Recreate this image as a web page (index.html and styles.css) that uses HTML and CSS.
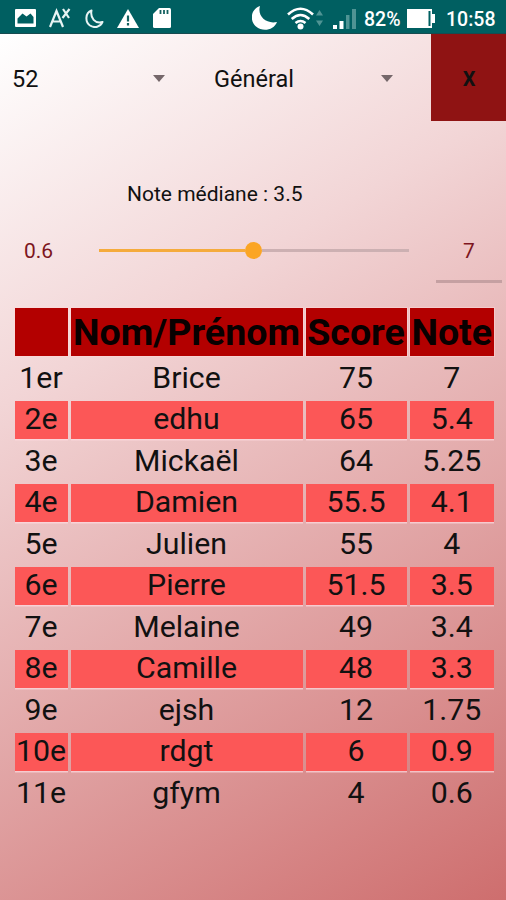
FILE: index.html
```
<!DOCTYPE html>
<html lang="fr">
<head>
    <meta charset="UTF-8">
    <meta name="viewport" content="width=device-width, initial-scale=1.0">
    <title>Notes</title>
    <link rel="stylesheet" href="styles.css">
</head>
<body>

<div class="status-bar">
    <div class="notifications">
        <svg width="21" height="18" viewBox="0 0 21 18"><path fill="#fff" fill-rule="evenodd" d="M1 0h19a1 1 0 0 1 1 1v16a1 1 0 0 1-1 1H1a1 1 0 0 1-1-1V1a1 1 0 0 1 1-1zM2.500 14.500h16V8l-3-3.500-4 3-4-3-5 5z"/></svg>
        <svg class="font-icon" width="22" height="20" viewBox="0 0 22 20"><path fill="none" stroke="#e8f4f4" stroke-width="2.2" d="M1 19L7.500 3L14 19M3.500 13.500h8M14 1l6 9M20.500 1l-7 9"/></svg>
        <svg class="moon-icon" width="19" height="19" viewBox="0 0 19 19"><path fill="none" stroke="#e8f4f4" stroke-width="2" stroke-linejoin="round" d="M6.500 1.500C0 4 0 13 5 16.500C9.500 19.500 15.500 18 17.500 13C10 15 5 9 6.500 1.500z"/></svg>
        <svg class="warning-icon" width="22" height="19" viewBox="0 0 22 19"><path fill="#fff" d="M11 0l11 19H0z"/><path stroke="#12605f" stroke-width="2.200" d="M11 6.500v6M11 14v2.400"/></svg>
        <svg class="card-icon" width="18" height="20" viewBox="0 0 18 20"><path fill="#fff" d="M6 0h10.500A1.500 1.500 0 0 1 18 1.500v17a1.500 1.500 0 0 1-1.500 1.500h-15A1.500 1.500 0 0 1 0 18.500V6z"/><path stroke="#12605f" stroke-width="1.800" d="M7.500 2v4M11 2v4M14.500 2v4"/></svg>
    </div>
    <div class="system">
        <svg width="25" height="24" viewBox="0 0 25 24"><path fill="#fff" d="M8 0C-1 3-3 14 4 20.500C11 26.500 22 24 25 16C14 18.500 5 10 8 0z"/></svg>
        <svg class="wifi-icon" width="27" height="23" viewBox="0 0 27 23"><path fill="none" stroke="#fff" stroke-width="2.600" d="M1 7.500Q13.500-4 26 7.500M4.700 12Q13.500 4 22.300 12M8.500 16Q13.500 12 18.500 16"/><circle cx="13.500" cy="19.500" r="3" fill="#fff"/></svg>
        <svg class="data-icon" width="7" height="16" viewBox="0 0 7 16"><path fill="#4f9494" d="M0 5.500L3.500 0L7 5.500zM0 10.500h7L3.500 16z"/></svg>
        <svg class="signal-icon" width="23" height="20" viewBox="0 0 23 20"><path fill="#fff" d="M0 16h4v4H0zM6.500 12h4v8h-4z"/><path fill="#4f9494" d="M13 6h3.500v14H13zM19 0h4v20h-4z"/></svg>
        <span class="battery-level">82%</span>
        <svg class="battery-icon" width="28" height="19" viewBox="0 0 28 19"><path fill="#fff" fill-rule="evenodd" d="M0 0h25v5h3v9h-3v5H0zM21.500 2v15h2V2z"/></svg>
        <span class="clock">10:58</span>
    </div>
</div>

<div class="app">
    <div class="toolbar">
        <div class="spinner spinner-test">52</div>
        <div class="spinner spinner-group">Général</div>
        <button class="close-btn">X</button>
    </div>

    <div class="median">Note médiane : 3.5</div>

    <div class="slider-row">
        <div class="min-note">0.6</div>
        <div class="slider"><div class="slider-fill"></div><div class="slider-thumb"></div><div class="slider-rest"></div></div>
        <div class="max-note">7</div>
    </div>

    <table class="ranking">
        <colgroup><col class="col-rank"><col class="col-name"><col class="col-score"><col class="col-note"></colgroup>
        <thead>
            <tr><th></th><th>Nom/Prénom</th><th>Score</th><th>Note</th></tr>
        </thead>
        <tbody>
            <tr><td>1er</td><td>Brice</td><td>75</td><td>7</td></tr>
            <tr><td>2e</td><td>edhu</td><td>65</td><td>5.4</td></tr>
            <tr><td>3e</td><td>Mickaël</td><td>64</td><td>5.25</td></tr>
            <tr><td>4e</td><td>Damien</td><td>55.5</td><td>4.1</td></tr>
            <tr><td>5e</td><td>Julien</td><td>55</td><td>4</td></tr>
            <tr><td>6e</td><td>Pierre</td><td>51.5</td><td>3.5</td></tr>
            <tr><td>7e</td><td>Melaine</td><td>49</td><td>3.4</td></tr>
            <tr><td>8e</td><td>Camille</td><td>48</td><td>3.3</td></tr>
            <tr><td>9e</td><td>ejsh</td><td>12</td><td>1.75</td></tr>
            <tr><td>10e</td><td>rdgt</td><td>6</td><td>0.9</td></tr>
            <tr><td>11e</td><td>gfym</td><td>4</td><td>0.6</td></tr>
        </tbody>
    </table>
</div>

</body>
</html>
```
FILE: styles.css
```
* {
    box-sizing: border-box;
}
body {
    font-family: Roboto, sans-serif;
    color: #111;
    margin: 0;
    height: 900px;
    display: flex;
    flex-direction: column;
    overflow: hidden;
}
.status-bar {
    height: 34px;
    flex: none;
    background-color: #005f61;
    border-bottom: 1px solid #174b50;
    display: flex;
    justify-content: space-between;
    padding: 3px 11px 0 15px;
    color: white;
}
.notifications, .system {
    display: flex;
    align-items: center;
}
.font-icon {
    margin-left: 13px;
}
.moon-icon {
    margin-left: 14px;
}
.warning-icon {
    margin-left: 13px;
}
.card-icon {
    margin-left: 14px;
}
.wifi-icon {
    margin-left: 10px;
}
.data-icon {
    margin-left: 2px;
}
.signal-icon {
    margin-left: 10px;
    margin-top: 2px;
}
.battery-level {
    font-size: 19.5px;
    font-weight: 500;
    margin-left: 8px;
    width: 37px;
    padding-top: 2px;
    white-space: nowrap;
}
.battery-icon {
    margin-left: 6px;
}
.clock {
    font-size: 19.5px;
    font-weight: 500;
    margin-left: 11px;
    width: 49px;
    padding-top: 2px;
    white-space: nowrap;
}
.app {
    flex: 1;
    background: linear-gradient(149.7deg, #fff 0%, #f2d5d6 32%, #ce6e6e 100%);
}
.toolbar {
    display: flex;
    height: 87px;
}
.spinner {
    display: flex;
    align-items: center;
    justify-content: space-between;
    padding-top: 2px;
    font-size: 23.5px;
}
.spinner::after {
    content: "";
    border: 6.5px solid transparent;
    border-top: 7px solid #75676a;
    border-bottom: none;
}
.spinner-test {
    width: 165px;
    padding-left: 12px;
}
.spinner-group {
    width: 228px;
    padding-left: 49px;
}
.close-btn {
    width: 75px;
    margin-left: auto;
    padding: 2px 0 0 1px;
    border: none;
    background-color: #8f1313;
    color: #111;
    font-family: inherit;
    font-size: 20px;
    font-weight: bold;
}
.median {
    margin-top: 60px;
    padding-left: 127px;
    font-size: 21px;
    line-height: 26px;
}
.slider-row {
    display: flex;
    height: 76px;
}
.min-note, .max-note {
    font-size: 21px;
    line-height: 26px;
    padding-top: 31px;
    color: #7d1520;
    text-align: center;
}
.min-note {
    width: 77px;
}
.slider {
    display: flex;
    align-items: center;
    width: 310px;
    height: 18px;
    margin: 34px 27px 0 22px;
}
.slider-fill {
    width: 146px;
    height: 3px;
    background-color: #f5ab3c;
}
.slider-thumb {
    width: 17px;
    height: 17px;
    border-radius: 50%;
    background-color: #fba524;
}
.slider-rest {
    flex: 1;
    height: 3px;
    background-color: #ccb0b2;
}
.max-note {
    width: 66px;
    border-bottom: 3px solid #c5a0a2;
}
.ranking {
    table-layout: fixed;
    width: 485.5px;
    margin: 21px 0 0 11.5px;
    border-spacing: 3px 4px;
    text-align: center;
}
.col-rank {
    width: 53px;
}
.col-name {
    width: 232px;
}
.col-score {
    width: 101px;
}
.col-note {
    width: 84.5px;
}
th {
    height: 47.5px;
    padding: 0;
    background-color: #b30000;
    font-size: 37.6px;
    line-height: 40px;
    white-space: nowrap;
    color: #080000;
    box-shadow: 0 0 0 1px rgba(255, 215, 215, 0.5);
}
td {
    height: 37.5px;
    padding: 0;
    font-size: 30.3px;
    line-height: 36px;
}
tbody tr:nth-child(even) td {
    padding-bottom: 1.5px;
    background-color: #fc5757;
    box-shadow: 0 1.500px 0 rgba(255, 220, 225, 0.7);
}
```
